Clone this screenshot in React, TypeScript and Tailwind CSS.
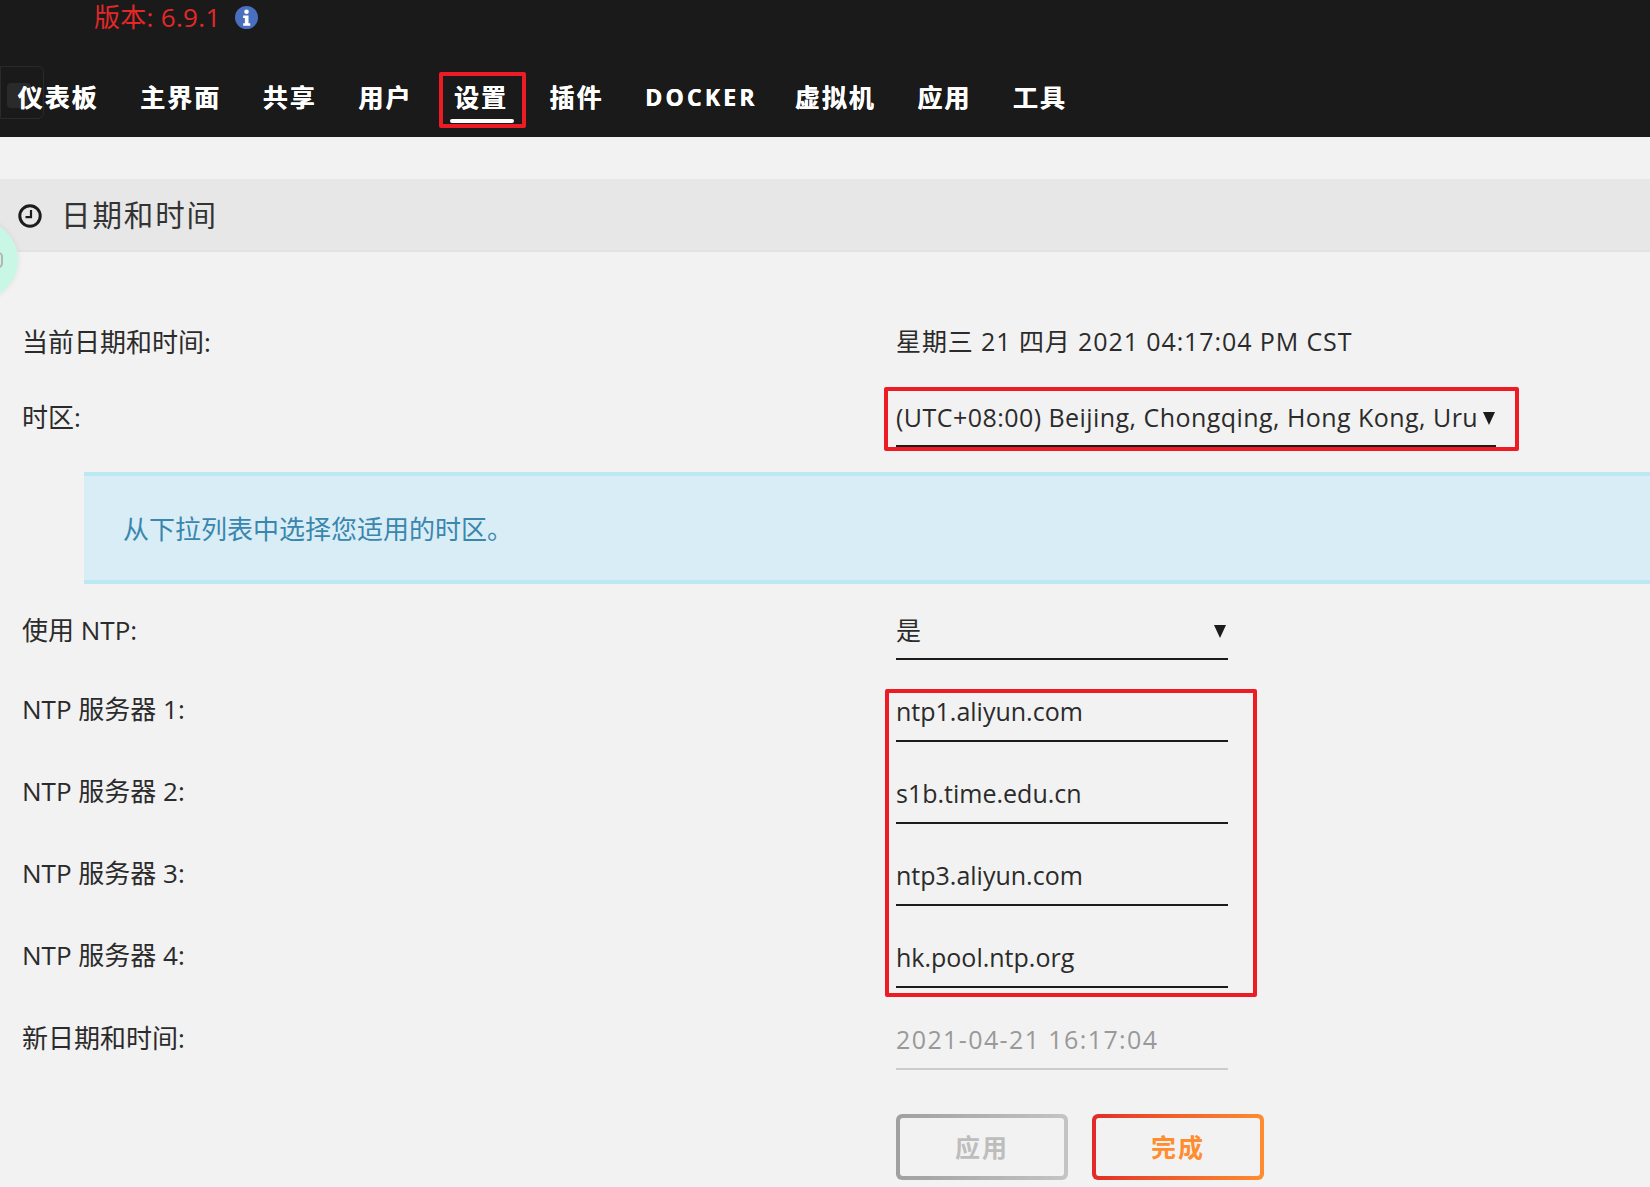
const FONT = "[font-family:'Open_Sans','Noto_Sans_CJK_SC',sans-serif]";

const NAV = [
  { t: "仪表板", w: "w-[81px]" },
  { t: "主界面", w: "w-[81px]" },
  { t: "共享", w: "w-[54px]" },
  { t: "用户", w: "w-[54px]" },
  { t: "设置", w: "w-[54px]", active: true },
  { t: "插件", w: "w-[54px]" },
  { t: "DOCKER", w: "w-[108px]" },
  { t: "虚拟机", w: "w-[81px]" },
  { t: "应用", w: "w-[54px]" },
  { t: "工具", w: "w-[54px]" },
];

function Clock() {
  return (
    <svg viewBox="0 0 24 24" className="w-[24px] h-[24px] shrink-0" fill="none" stroke="#1c1c1c">
      <circle cx="12" cy="12" r="10.2" strokeWidth="3" />
      <path d="M13 6v7.2H7.5" strokeWidth="2.2" />
    </svg>
  );
}

function Info() {
  return (
    <svg viewBox="0 0 24 24" className="w-[23px] h-[23px] ml-[14px]">
      <circle cx="12" cy="12" r="12" fill="#4a6fc0" />
      <circle cx="12" cy="6" r="2.4" fill="#fff" />
      <path d="M8.5 10h5.6v8h1.8v2.6H8.5V18h1.8v-5.4H8.5z" fill="#fff" />
    </svg>
  );
}

function Arrow({ className }: { className: string }) {
  return (
    <svg viewBox="0 0 12 13" className={className}>
      <path d="M0 0h12L6 13z" fill="#1c1c1c" />
    </svg>
  );
}

function Label({ text, lead }: { text: string; lead: string }) {
  return <div className={`w-[896px] shrink-0 pl-[22px] text-[26px] text-[#2b2b2b] ${lead}`}>{text}</div>;
}

function InputRow({ label, value }: { label: string; value: string }) {
  return (
    <div className="flex h-[56px]">
      <Label text={label} lead="leading-[47px]" />
      <div className="w-[332px] h-[56px] border-b-2 border-[#1c1c1c] text-[25px] leading-[51px] text-[#2b2b2b]">
        {value}
      </div>
    </div>
  );
}

export default function App() {
  return (
    <div className={`relative w-[1650px] h-[1187px] overflow-hidden bg-[#f2f2f2] ${FONT}`}>
      <header className="relative h-[137px] bg-[#1a1a1a]">
        <div className="absolute left-0 top-[66px] w-[44px] h-[53px] rounded-r-md border border-[#2a2a2a]">
          <div className="absolute left-[6px] top-[16px] w-[24px] h-[25px] rounded-sm bg-[#2a2a2a]" />
        </div>
        <div className="flex items-center h-[35px] pl-[94px] text-[#e22828] text-[26px] tracking-[0.3px]">
          <span>版本: 6.9.1</span>
          <Info />
        </div>
        <nav className="flex gap-[41.6px] pl-[17.5px] mt-[44px] text-white font-bold text-[25px] leading-[36px] tracking-[2px] [text-shadow:0.4px_0_0_white]">
          {NAV.map((n) => (
            <div key={n.t} className={`relative shrink-0 whitespace-nowrap ${n.w} ${n.t === "DOCKER" ? "tracking-[3.2px] text-[23px]" : ""}`}>
              {n.t}
              {n.active && (
                <>
                  <div className="absolute left-[-4px] top-[40px] w-[64px] h-[4px] rounded-full bg-white" />
                  <div className="absolute left-[-15px] top-[-7px] w-[87px] h-[56px] rounded-[2px] border-[4px] border-[#ed1c24]" />
                </>
              )}
            </div>
          ))}
        </nav>
      </header>

      <div className="mt-[42px] h-[73px] flex items-center gap-[19px] pl-[18px] pt-[2px] bg-[#e7e7e7] border-b-2 border-[#e2e2e2] text-[29.5px] tracking-[1.9px] text-[#333]">
        <Clock />
        <span>日期和时间</span>
      </div>

      <div className="absolute left-[-62px] top-[220px] w-[80px] h-[80px] rounded-full bg-[#c9f7e6] shadow-[0_0_6px_rgba(0,0,0,0.08)]">
        <div className="absolute left-[56px] top-[32px] w-[9px] h-[16px] rounded-full border-2 border-[#b5b5b5]" />
      </div>

      <div className="mt-[58px] flex h-[64px] items-center">
        <Label text="当前日期和时间:" lead="" />
        <div className="text-[25px] tracking-[0.9px] text-[#2b2b2b] whitespace-nowrap">星期三 21 四月 2021 04:17:04 PM CST</div>
      </div>

      <div className="mt-[13px] flex h-[64px] items-center relative">
        <Label text="时区:" lead="pb-[3px]" />
        <div className="relative w-[600px] h-[60px] self-start border-b-2 border-[#1c1c1c] text-[25px] tracking-[0.45px] leading-[60px] text-[#2b2b2b] whitespace-nowrap">
          (UTC+08:00) Beijing, Chongqing, Hong Kong, Uru
          <Arrow className="absolute right-[1px] top-[25px] w-[12px] h-[13px]" />
        </div>
        <div className="absolute left-[884px] top-0 w-[635px] h-[64px] rounded-[2px] border-[4px] border-[#ed1c24]" />
      </div>

      <div className="mt-[21px] ml-[84px] h-[112px] flex items-center pl-[39px] pt-[2px] bg-[#d9edf7] border-y-4 border-[#bce8f1] text-[26px] text-[#3a87ad]">
        从下拉列表中选择您适用的时区。
      </div>

      <div className="mt-[20px] flex h-[56px]">
        <Label text="使用 NTP:" lead="leading-[52px]" />
        <div className="relative w-[332px] h-[56px] border-b-2 border-[#1c1c1c] text-[25px] leading-[52px] text-[#2b2b2b]">
          是
          <Arrow className="absolute right-[2px] top-[21px] w-[12px] h-[13px]" />
        </div>
      </div>

      <div className="relative mt-[26px] flex flex-col gap-[26px]">
        <InputRow label="NTP 服务器 1:" value="ntp1.aliyun.com" />
        <InputRow label="NTP 服务器 2:" value="s1b.time.edu.cn" />
        <InputRow label="NTP 服务器 3:" value="ntp3.aliyun.com" />
        <InputRow label="NTP 服务器 4:" value="hk.pool.ntp.org" />
        <div className="absolute left-[885px] top-[3px] w-[372px] h-[308px] rounded-[2px] border-[4px] border-[#ed1c24]" />
      </div>

      <div className="mt-[26px] flex h-[56px]">
        <Label text="新日期和时间:" lead="leading-[48px]" />
        <div className="w-[332px] h-[56px] border-b-2 border-[#cccccc] text-[25px] tracking-[1.4px] leading-[50px] text-[#999999]">
          2021-04-21 16:17:04
        </div>
      </div>

      <div className="mt-[44px] ml-[896px] flex gap-[24px]">
        <div className="w-[172px] h-[66px] p-[4px] rounded-[6px] bg-linear-to-r from-[#a0a0a0] to-[#c4c4c4]">
          <div className="h-full flex items-center justify-center pt-[1px] rounded-[3px] bg-[#f2f2f2] text-[25px] tracking-[2px] font-bold text-[#bdbdbd]">
            应用
          </div>
        </div>
        <div className="w-[172px] h-[66px] p-[4px] rounded-[6px] bg-linear-to-r from-[#e22828] to-[#ff8c2f]">
          <div className="h-full flex items-center justify-center pt-[1px] rounded-[3px] bg-[#f2f2f2] text-[25px] tracking-[2px] font-bold text-[#ff8c2f]">
            完成
          </div>
        </div>
      </div>
    </div>
  );
}
